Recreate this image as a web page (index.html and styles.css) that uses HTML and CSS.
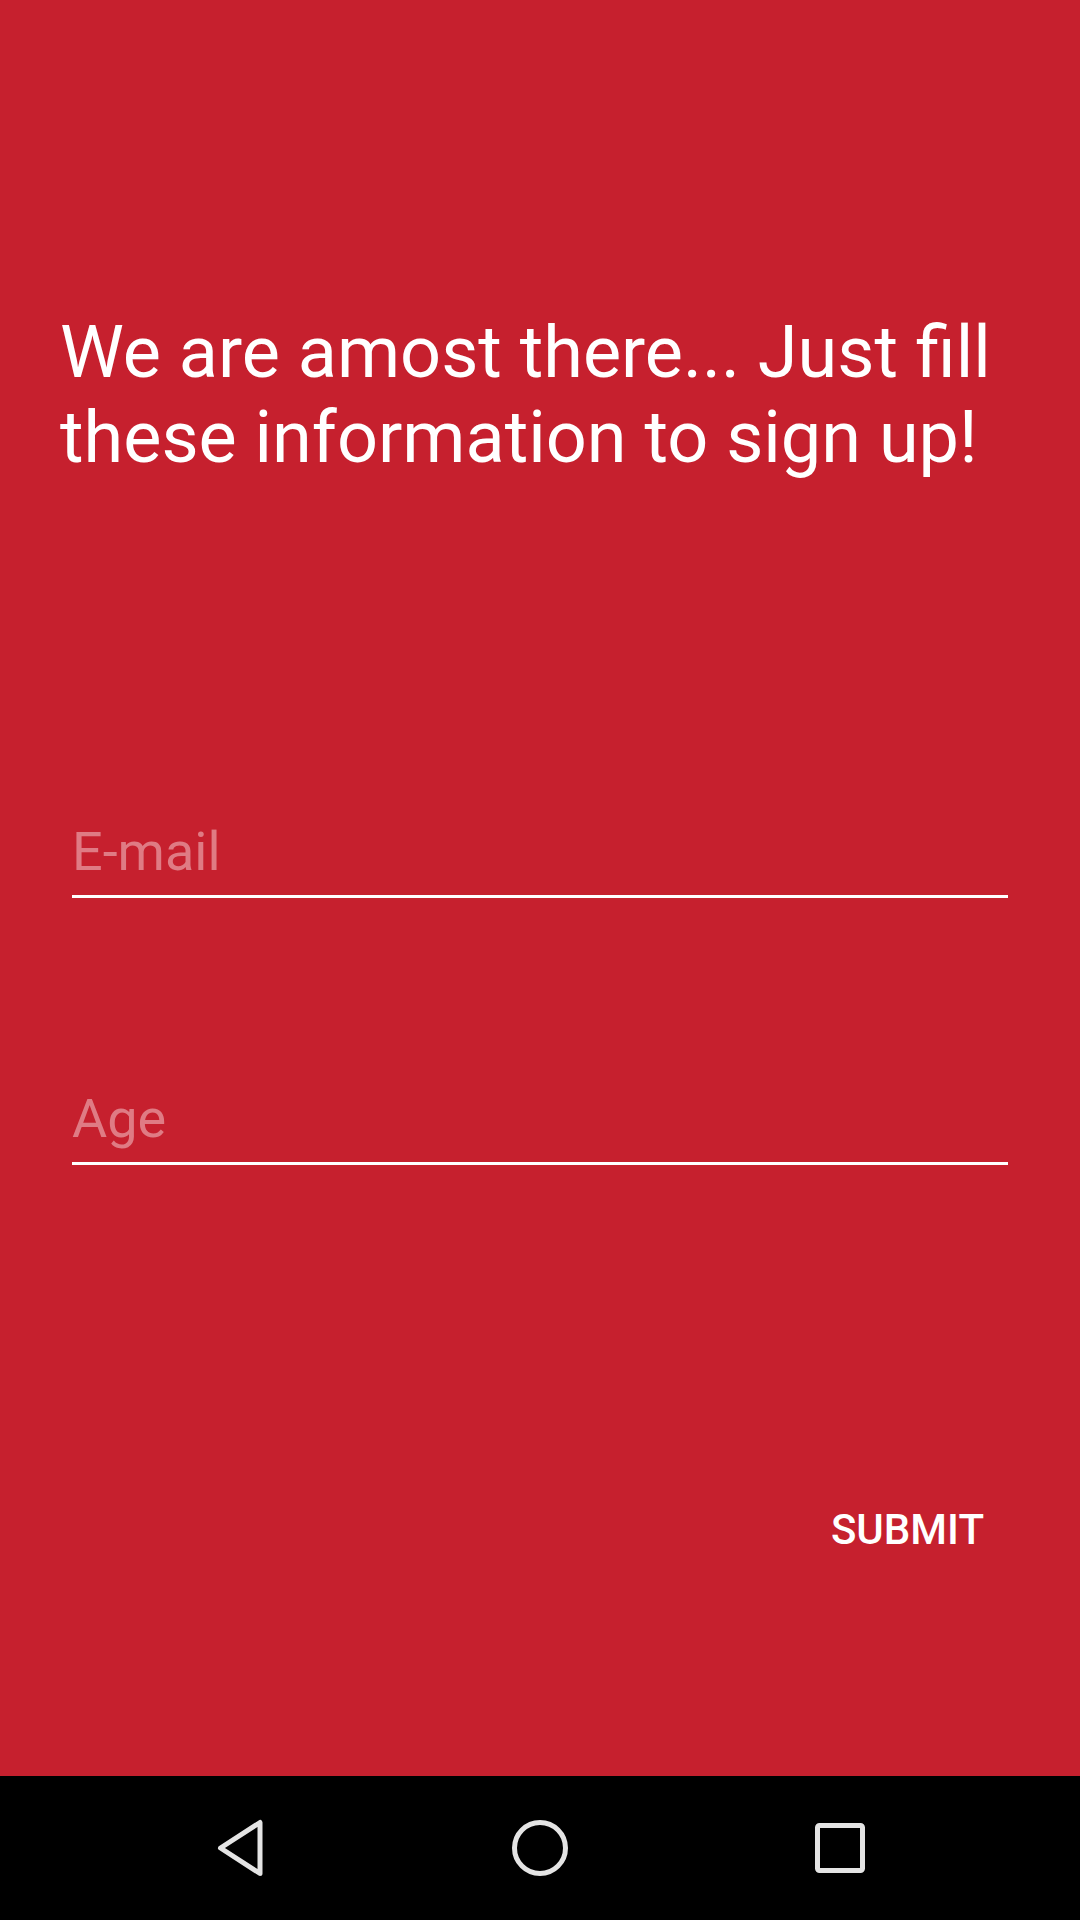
FILE: index.html
```html
<!DOCTYPE html>
<html>
<head>
<meta charset="utf-8">
<link rel="stylesheet" href="styles.css">
</head>
<body>
<div class="screen">
  <main class="content">
    <h1 class="title">We are amost there... Just fill these information to sign up!</h1>
    <div class="field field-email"><span class="hint">E-mail</span></div>
    <div class="field field-age"><span class="hint">Age</span></div>
    <div class="actions"><span class="submit">SUBMIT</span></div>
  </main>
  <nav class="navbar">
    <svg class="nav-icon" viewBox="0 0 60 60"><polygon points="10.5,30 50,4.5 50,55.5" fill="none" stroke="#e4e4e4" stroke-width="5" stroke-linejoin="round"/></svg>
    <svg class="nav-icon" viewBox="0 0 60 60"><circle cx="30" cy="30" r="25.5" fill="none" stroke="#e4e4e4" stroke-width="5"/></svg>
    <svg class="nav-icon" viewBox="0 0 60 60"><rect x="7.5" y="7.5" width="45" height="45" rx="2" fill="none" stroke="#e4e4e4" stroke-width="5"/></svg>
  </nav>
</div>
</body>
</html>
```
FILE: styles.css
```css
html, body {
  margin: 0;
  padding: 0;
}
body {
  width: 1080px;
  height: 1920px;
  overflow: hidden;
  font-family: Roboto, "Liberation Sans", sans-serif;
  background: #000;
}
.screen {
  display: flex;
  flex-direction: column;
  height: 1920px;
}
.content {
  height: 1776px;
  background: #c6202e;
  display: flex;
  flex-direction: column;
  color: #fff;
}
.title {
  margin: 310px 60px 0 60px;
  font-size: 72px;
  font-weight: 400;
  line-height: 85px;
}
.field {
  box-sizing: border-box;
  margin-left: 72px;
  width: 936px;
  border-bottom: 3px solid #fff;
  padding: 0 0 12px 0;
  font-size: 54px;
  line-height: 63px;
}
.field-email {
  margin-top: 340px;
}
.field-age {
  margin-top: 189px;
}
.hint {
  color: #df7b84;
}
.actions {
  display: flex;
  justify-content: flex-end;
  padding-right: 96px;
  margin-top: 340px;
}
.submit {
  font-size: 42px;
  font-weight: 500;
  line-height: 49px;
  color: #fff;
}
.navbar {
  height: 144px;
  background: #000;
  display: flex;
  justify-content: center;
  align-items: center;
  gap: 240px;
}
.nav-icon {
  width: 60px;
  height: 60px;
  display: block;
}
```
